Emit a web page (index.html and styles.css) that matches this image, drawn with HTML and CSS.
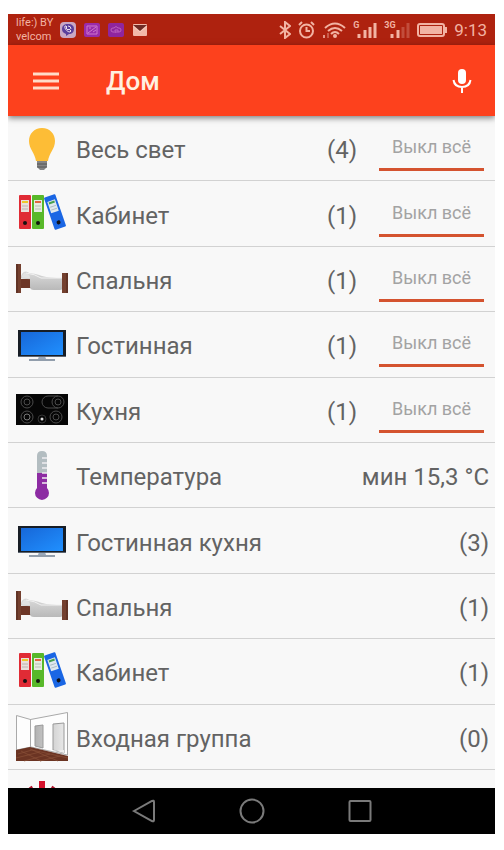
FILE: index.html
```html
<!DOCTYPE html>
<html lang="ru">
<head>
<meta charset="utf-8">
<meta name="viewport" content="width=device-width, initial-scale=1">
<title>Дом</title>
<link rel="stylesheet" href="styles.css">
</head>
<body>
<svg class="defs" aria-hidden="true">
  <defs>
    <linearGradient id="sheet" x1="0" y1="0" x2="0" y2="1"><stop offset="0" stop-color="#d8d8d8"/><stop offset="1" stop-color="#b9b9b9"/></linearGradient>
    <linearGradient id="panel" x1="0" y1="0" x2="1" y2="1"><stop offset="0" stop-color="#1767d8"/><stop offset="1" stop-color="#2090ff"/></linearGradient>
    <linearGradient id="door" x1="0" y1="0" x2="1" y2="0"><stop offset="0" stop-color="#b2b2b2"/><stop offset="1" stop-color="#e8e8e8"/></linearGradient>
    <symbol id="binders" viewBox="0 0 52 52">
      <rect x="3" y="7" width="12" height="34" rx="1" fill="#e02b35"/>
      <rect x="5" y="12" width="8" height="12" fill="#e9e0dc"/><path d="M6 14h6" stroke="#edc92b" stroke-width="2"/><path d="M6 18h6M6 21h6" stroke="#bcb4b2"/>
      <circle cx="9" cy="35" r="2" fill="#171111"/>
      <rect x="16" y="7" width="12" height="34" rx="1" fill="#58b82a"/>
      <rect x="18" y="12" width="8" height="12" fill="#e4ebe0"/><path d="M19 14h6" stroke="#e0663f" stroke-width="2"/><path d="M19 18h6M19 21h6" stroke="#b7beb4"/>
      <circle cx="22" cy="35" r="2" fill="#111711"/>
      <g transform="rotate(-19 39 24)">
        <rect x="33" y="7" width="12" height="34" rx="1" fill="#1a66e4"/>
        <rect x="35" y="12" width="8" height="12" fill="#dfe8ee"/><path d="M36 14h6" stroke="#47a052" stroke-width="2"/><path d="M36 18h6M36 21h6" stroke="#aebbc4"/>
        <circle cx="39" cy="35" r="2" fill="#101218"/>
      </g>
    </symbol>
    <symbol id="bed" viewBox="0 0 52 52">
      <path d="M4 26h13v9H4z" fill="#6d3627"/>
      <path d="M5 25q1-6 5-6l7 3v4z" fill="#e2e2e2" stroke="#c2c2c2" stroke-width=".6"/>
      <path d="M14 25q0-4-4-5 9 0 16 3 8 2 21 2v9q0 3-3 3H18q-4 0-4-3z" fill="url(#sheet)"/>
      <path d="M10 20q9 1 15 5h21" fill="none" stroke="#f1f1f1"/>
      <path d="M0 11h5v29H0zM46 20h6v20h-6z" fill="#74402f"/>
      <path d="M1 11v29M51 20v20" stroke="#4f271d"/>
    </symbol>
    <symbol id="tv" viewBox="0 0 52 52">
      <path d="M23 37h6l1 3h-8z" fill="#9aa9bb"/><path d="M13 41h26" stroke="#929eac" stroke-width="2"/>
      <rect x="2" y="11" width="48" height="27" fill="#171d25"/>
      <rect x="5" y="13" width="42" height="23" fill="url(#panel)"/>
      <path d="M2 37.500h48" stroke="#8a95a2" stroke-width=".6"/>
    </symbol>
    <symbol id="hob" viewBox="0 0 52 52">
      <rect y="10" width="52" height="31" fill="#060606"/>
      <g fill="none" stroke="#4b4b4b">
        <circle cx="11" cy="18" r="6"/><circle cx="11" cy="18" r="3"/>
        <circle cx="11" cy="33" r="6"/><circle cx="11" cy="33" r="3" stroke="#777"/>
        <path d="M42 12H32a6 6 0 0 0 0 12h10"/><circle cx="42" cy="18" r="6"/><circle cx="42" cy="18" r="3"/>
        <circle cx="40" cy="33" r="6"/><circle cx="40" cy="33" r="3"/><circle cx="26" cy="35" r="4" stroke="#333"/>
      </g>
      <circle cx="26" cy="35" r="1.500" fill="#ddd"/>
    </symbol>
  </defs>
</svg>

<div class="screen">
  <header class="status">
    <p class="carrier">life:) BY<br>velcom</p>
    <div class="notices">
      <svg class="notice" viewBox="0 0 16 16" aria-hidden="true"><rect width="16" height="16" rx="4" fill="#c9a7c4"/><path d="M8 2c4 0 6 2 6 5s-2 5-5 5l-3 2v-2C3 11 2 9 2 7c0-3 2-5 6-5z" fill="#5b3f9b"/><path d="M5 4c-1 2 2 6 5 6l1-1-2-2-1 1-2-2 1-1-1-1zM8 4q3 0 3 3" fill="none" stroke="#ecdcec"/></svg>
      <svg class="notice" viewBox="0 0 16 16" aria-hidden="true"><rect y="1" width="16" height="14" rx="2" fill="#9a2bab"/><path d="M3 4h10v8H3zM4 11l8-6M9 10l3-2M5 6h2" fill="none" stroke="#cf79cc"/></svg>
      <svg class="notice" viewBox="0 0 16 16" aria-hidden="true"><rect y="1" width="16" height="14" rx="2" fill="#8f259e"/><path d="M6 10H5a2 2 0 0 1 0-4h1q2-3 4 0h1a2 2 0 0 1 0 4h-1M7 11V8h3v2H7" fill="none" stroke="#bd60bd"/></svg>
      <svg class="notice" viewBox="0 0 16 16" aria-hidden="true"><rect x="1" y="2" width="14" height="12" rx="1" fill="#f3b9a9"/><path d="M1 3h14L8 9z" fill="#6f2b25"/><path d="M1 4l7 6 7-6" fill="none" stroke="#f6cdbf"/></svg>
    </div>
    <div class="system">
      <svg class="bt" viewBox="0 0 12 18" aria-hidden="true"><path d="M1 5l10 8-5 4V1l5 4-10 8"/></svg>
      <svg class="alarm" viewBox="0 0 17 18" aria-hidden="true"><circle cx="8.500" cy="10" r="6.500"/><path d="M8.500 6v4H12M1 4l3-3M16 4l-3-3"/></svg>
      <svg class="wifi" viewBox="0 0 24 18" aria-hidden="true"><path d="M3 7q10-9 20 0M6 10q7-6 14 0M9 13q4-4 8 0"/><circle class="solid" cx="13" cy="15" r="2"/><path d="M2 14v3" opacity=".8"/><path d="M6 12v5" opacity=".4"/></svg>
      <span class="signal"><b>G</b><svg viewBox="0 0 20 18" aria-hidden="true"><path d="M2 13v4M8 9v8M13 6v11M18 2v15"/></svg></span>
      <span class="signal wide"><b>3G</b><svg viewBox="0 0 20 18" aria-hidden="true"><path d="M2 13v4M8 9v8"/><path d="M13 6v11M18 2v15" opacity=".3"/></svg></span>
      <svg class="battery" viewBox="0 0 30 14" aria-hidden="true"><rect x="1" y="1" width="26" height="12" rx="2"/><rect class="solid" x="3" y="3" width="22" height="8"/><path d="M29 4v6"/></svg>
      <time class="clock">9:13</time>
    </div>
  </header>

  <div class="appbar">
    <button class="icon-button" type="button" aria-label="Меню"><svg class="menu" viewBox="0 0 26 18"><path d="M0 2h26M0 9h26M0 16h26"/></svg></button>
    <h1>Дом</h1>
    <button class="icon-button mic-button" type="button" aria-label="Голосовой ввод"><svg class="mic" viewBox="0 0 20 26"><rect x="6" y="1" width="8" height="15" rx="4"/><path d="M1.500 12q1 7 8.500 7t8.500-7M10 19v6"/></svg></button>
  </div>

  <ul class="list">
    <li class="row">
      <svg class="picture" viewBox="0 0 52 52" aria-hidden="true"><path d="M26 5c-8 0-13 6-13 13 0 8 6 12 7 20h12c1-8 7-12 7-20 0-7-5-13-13-13z" fill="#fdbd36"/><path d="M21 38h10v6l-3 3h-4l-3-3z" fill="#858585"/><path d="M21 41h10M21 44h10" stroke="#555"/></svg>
      <span class="name">Весь свет</span><span class="value">(4)</span><button class="off" type="button">Выкл всё</button>
    </li>
    <li class="row">
      <svg class="picture" aria-hidden="true"><use href="#binders"/></svg>
      <span class="name">Кабинет</span><span class="value">(1)</span><button class="off" type="button">Выкл всё</button>
    </li>
    <li class="row">
      <svg class="picture" aria-hidden="true"><use href="#bed"/></svg>
      <span class="name">Спальня</span><span class="value">(1)</span><button class="off" type="button">Выкл всё</button>
    </li>
    <li class="row">
      <svg class="picture" aria-hidden="true"><use href="#tv"/></svg>
      <span class="name">Гостинная</span><span class="value">(1)</span><button class="off" type="button">Выкл всё</button>
    </li>
    <li class="row">
      <svg class="picture" aria-hidden="true"><use href="#hob"/></svg>
      <span class="name">Кухня</span><span class="value">(1)</span><button class="off" type="button">Выкл всё</button>
    </li>
    <li class="row">
      <svg class="picture" viewBox="0 0 52 52" aria-hidden="true"><path d="M21 23V6q0-5 5-5t5 5v17z" fill="#b3bdc1"/><path d="M21 23h10v15a7 7 0 1 1-10 0z" fill="#8d2ca3"/><path d="M26 8h5M26 13h5M26 18h5M26 23h5M26 28h5M26 33h5" stroke="#f0edf1" stroke-width="1.500"/></svg>
      <span class="name">Температура</span><span class="value">мин 15,3 °C</span>
    </li>
    <li class="row">
      <svg class="picture" aria-hidden="true"><use href="#tv"/></svg>
      <span class="name">Гостинная кухня</span><span class="value">(3)</span>
    </li>
    <li class="row">
      <svg class="picture" aria-hidden="true"><use href="#bed"/></svg>
      <span class="name">Спальня</span><span class="value">(1)</span>
    </li>
    <li class="row">
      <svg class="picture" aria-hidden="true"><use href="#binders"/></svg>
      <span class="name">Кабинет</span><span class="value">(1)</span>
    </li>
    <li class="row">
      <svg class="picture" viewBox="0 0 52 52" aria-hidden="true"><path d="M.5 4.500l14 4 37-7V44L15 36 .5 39z" fill="#fdfdfd" stroke="#a9a9a9"/><path d="M14.500 8v28" stroke="#a9a9a9"/><path d="M19 15l8-1v23l-8-2zM37 13l11-1v30l-11-3z" fill="url(#door)" stroke="#999"/><path d="M37 39l11 3v-3l-11 1z" fill="#eee"/><path d="M0 39l14-3 38 9v5H0z" fill="#6b3423"/><path d="M2 43l14-4 36 8M0 47l24-6M8 50l26-7M24 50l20-5M5 40l20 10M14 38l28 12" fill="none" stroke="#8a5038" stroke-width=".7"/></svg>
      <span class="name">Входная группа</span><span class="value">(0)</span>
    </li>
    <li class="row">
      <svg class="picture" viewBox="0 0 52 52" aria-hidden="true"><path d="M23 4h6v22h-6z" fill="#d4122c"/><path d="M17 11a18 18 0 1 0 18 0" fill="none" stroke="#b0122a" stroke-width="5"/></svg>
    </li>
  </ul>

  <nav class="navbar">
    <button type="button" aria-label="Назад"><svg viewBox="0 0 26 26"><path d="M3 13L21 3q2-1 2 1v18q0 2-2 1z"/></svg></button>
    <button type="button" aria-label="Домой"><svg viewBox="0 0 26 26"><circle cx="13" cy="13" r="11.500"/></svg></button>
    <button type="button" aria-label="Недавние"><svg viewBox="0 0 26 26"><rect x="2.500" y="3" width="21" height="20" rx="1"/></svg></button>
  </nav>
</div>
</body>
</html>
```
FILE: styles.css
```css
* {
  box-sizing: border-box;
}

body {
  margin: 0;
  min-height: 100vh;
  padding: 14px 9px 16px 8px;
  display: flex;
  background: #fff;
  font-family: Roboto, "Liberation Sans", sans-serif;
}

button {
  margin: 0;
  padding: 0;
  border: 0;
  background: none;
  font: inherit;
  cursor: pointer;
}

svg {
  display: block;
  flex: none;
}

.defs {
  position: absolute;
  width: 0;
  height: 0;
}

.screen {
  flex: 1;
  min-width: 0;
  display: flex;
  flex-direction: column;
  overflow: hidden;
  background: #f8f8f8;
}

/* Status bar */

.status {
  display: flex;
  align-items: center;
  height: 31px;
  padding: 0 8px;
  background: #ae220f;
  color: #f2b3a3;
}

.carrier {
  margin: 0;
  width: 44px;
  font-size: 11px;
  line-height: 14px;
  white-space: nowrap;
}

.notices {
  display: flex;
  gap: 8px;
}

.notice {
  width: 16px;
  height: 16px;
}

.system {
  display: flex;
  align-items: center;
  gap: 7px;
  margin-left: auto;
}

.system svg {
  height: 18px;
  fill: none;
  stroke: currentColor;
  stroke-width: 2;
}

.system .solid {
  fill: currentColor;
  stroke: none;
}

.system .bt {
  width: 12px;
}

.system .alarm {
  width: 17px;
}

.system .wifi {
  width: 24px;
}

.signal {
  display: flex;
  align-items: flex-start;
}

.signal b {
  width: 4px;
  font-size: 9px;
  line-height: 8px;
}

.signal.wide b {
  width: 6px;
}

.signal svg {
  width: 20px;
  stroke-width: 3;
}

.system .battery {
  width: 30px;
  height: 14px;
}

.clock {
  font-size: 17px;
  line-height: 20px;
}

/* App bar */

.appbar {
  position: relative;
  display: flex;
  align-items: center;
  height: 71px;
  padding: 0 8px;
  background: #fd411d;
  color: #fff0e0;
  box-shadow: 0 2px 6px rgba(0, 0, 0, 0.5);
}

.appbar h1 {
  flex: 1;
  margin: 0 0 0 30px;
  font-size: 26px;
  font-weight: 500;
  line-height: 32px;
}

.icon-button {
  display: grid;
  place-items: center;
  width: 60px;
  height: 56px;
  color: #ffdcc8;
}

.mic-button {
  width: 50px;
  color: #fff;
}

.menu {
  width: 26px;
  height: 18px;
  stroke: currentColor;
  stroke-width: 3;
}

.mic {
  width: 20px;
  height: 26px;
  fill: none;
  stroke: currentColor;
  stroke-width: 2;
}

.mic rect {
  fill: currentColor;
  stroke: none;
}

/* Rooms: ten full rows, with the next one peeking in at the bottom */

.list {
  flex: 1;
  display: grid;
  grid-template-rows: repeat(10, minmax(60px, 1fr)) 18px;
  margin: 0;
  padding: 0;
  list-style: none;
}

.row {
  display: flex;
  align-items: center;
  min-width: 0;
  padding: 1px 6px 0 8px;
  border-bottom: 1px solid #d2d2d2;
  color: #636363;
  font-size: 24px;
  line-height: 28px;
}

.row:last-child {
  align-items: flex-start;
  padding-top: 7px;
  border: 0;
  overflow: hidden;
}

.picture {
  width: 52px;
  height: 52px;
}

.name {
  flex: 1;
  margin-left: 8px;
}

.name,
.value {
  padding-top: 3px;
}

.value {
  white-space: nowrap;
}

.off {
  width: 105px;
  height: 45px;
  margin: 0 5px 0 22px;
  border-bottom: 3px solid #d4532f;
  color: #a3a3a3;
  font-size: 18px;
}

/* Navigation bar */

.navbar {
  display: flex;
  justify-content: center;
  height: 46px;
  background: #000;
}

.navbar button {
  display: grid;
  place-items: center;
  width: 108px;
}

.navbar svg {
  width: 26px;
  height: 26px;
  fill: none;
  stroke: #7a7a7a;
  stroke-width: 2;
}
```
